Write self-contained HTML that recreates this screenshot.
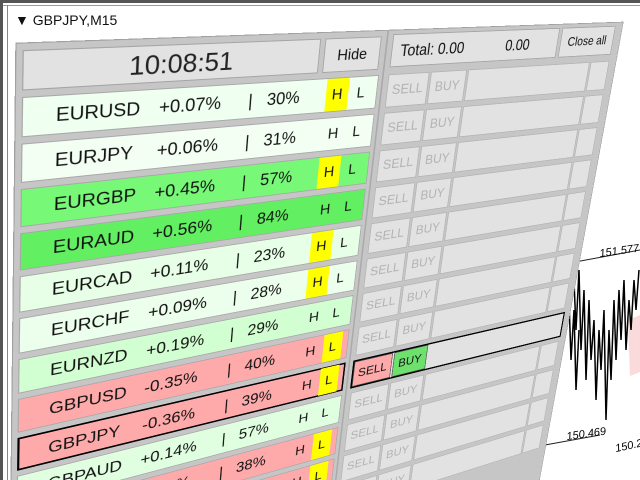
<!DOCTYPE html>
<html><head><meta charset="utf-8">
<style>
html,body{margin:0;padding:0;width:640px;height:480px;overflow:hidden;background:#fff;font-family:"Liberation Sans",sans-serif;}
.frame{position:absolute;left:0;top:0;width:640px;height:480px;overflow:hidden;}
#p{position:absolute;left:0;top:0;width:700px;height:400px;transform-origin:0 0;
transform:matrix3d(1.21856,-0.016214,0,0.00059864,-0.007346,1.10492,0,0.00031061,0,0,1,0,22,97,0,1);}
#p div{position:absolute;box-sizing:border-box;}
.bg{left:-6px;top:-50px;width:706px;height:760px;background:#c6c6c6;border:1px solid #a0a0a0;}
.box{background:#e2e2e2;border:1px solid #a4a4a4;}
.row{left:0;width:360px;height:38px;border:1px solid #a8a8a8;font-size:18px;color:#111;}
.row span{position:absolute;top:8px;}
.hb,.lb{top:0;height:36px;text-align:center;line-height:36px;font-size:17px;}
.cell{height:38px;background:#e2e2e2;border:1px solid #b4b4b4;color:#b2b2b2;font-size:16px;text-align:center;line-height:36px;}
</style></head><body>
<div class="frame">
<div style="position:absolute;left:0;top:0;width:640px;height:3px;background:#555"></div>
<div style="position:absolute;left:0;top:5px;width:640px;height:1px;background:#999"></div>
<div style="position:absolute;left:0;top:0;width:3px;height:480px;background:#555"></div>
<div style="position:absolute;left:7px;top:5px;width:1px;height:475px;background:#888"></div>
<div style="position:absolute;left:15px;top:12px;font-size:14px;color:#111">&#9660; GBPJPY,M15</div>
<svg style="position:absolute;left:0;top:0" width="640" height="480">
<polygon points="560,258 640,240 640,450 555,455" fill="#fff"/>
<polygon points="628,320 640,315 640,372 630,376" fill="#fadada"/>
<line x1="575" y1="262" x2="640" y2="250" stroke="#222"/>
<line x1="545" y1="445" x2="600" y2="435" stroke="#222"/>
<polyline points="572,300 574,280 576,330 579,270 581,350 584,290 586,380 589,300 591,360 594,320 596,400 599,330 601,370 604,310 606,420 609,330 611,380 614,300 616,360 619,290 621,340 624,280 626,350 629,300 631,330 634,280 636,310 639,270" fill="none" stroke="#000" stroke-width="1.5"/>
<polyline points="566,330 569,300 571,360 574,310 576,390 579,330" fill="none" stroke="#000" stroke-width="1.5"/>
<text x="600" y="257" font-size="11" font-family="Liberation Sans" font-style="italic" transform="rotate(-8 600 257)">151.577</text>
<text x="567" y="440" font-size="11" font-family="Liberation Sans" font-style="italic" transform="rotate(-8 567 440)">150.469</text>
<text x="616" y="452" font-size="11" font-family="Liberation Sans" font-style="italic" transform="rotate(-12 616 452)">150.20</text>
</svg>
<div id="p">
<div class="bg"></div>
<div class="box" style="left:0;top:-43px;width:287px;height:37px;font-size:26px;text-align:center;line-height:36px;color:#222">10:08:51</div>
<div class="box" style="left:292px;top:-43px;width:66px;height:37px;font-size:17px;text-align:center;line-height:36px;color:#111">Hide</div>
<div class="box" style="left:372px;top:-45px;width:228px;height:37px;font-size:18px;line-height:36px;color:#111"><span style="position:absolute;left:10px">Total: 0.00</span><span style="position:absolute;left:150px">0.00</span></div>
<div class="box" style="left:604px;top:-45px;width:84px;height:37px;font-size:16px;text-align:center;line-height:36px;color:#111">Close all</div>
<div style="left:364px;top:-50px;width:2px;height:760px;background:#aaa"></div>

<div class="row" style="top:0;background:#effff0"><span style="left:28px">EURUSD</span><span style="left:122px">+0.07%</span><span style="left:212px">|</span><span style="left:232px">30%</span><div class="hb" style="left:298px;width:26px;background:#ffff00">H</div><div class="lb" style="left:327px;width:24px">L</div></div>
<div class="row" style="top:44px;background:#f4fff4"><span style="left:28px">EURJPY</span><span style="left:122px">+0.06%</span><span style="left:212px">|</span><span style="left:232px">31%</span><div class="hb" style="left:298px;width:26px">H</div><div class="lb" style="left:327px;width:24px">L</div></div>
<div class="row" style="top:88px;background:#77f877"><span style="left:28px">EURGBP</span><span style="left:122px">+0.45%</span><span style="left:212px">|</span><span style="left:232px">57%</span><div class="hb" style="left:298px;width:26px;background:#ffff00">H</div><div class="lb" style="left:327px;width:24px">L</div></div>
<div class="row" style="top:132px;background:#62f062"><span style="left:28px">EURAUD</span><span style="left:122px">+0.56%</span><span style="left:212px">|</span><span style="left:232px">84%</span><div class="hb" style="left:298px;width:26px">H</div><div class="lb" style="left:327px;width:24px">L</div></div>
<div class="row" style="top:176px;background:#e6ffe6"><span style="left:28px">EURCAD</span><span style="left:122px">+0.11%</span><span style="left:212px">|</span><span style="left:232px">23%</span><div class="hb" style="left:298px;width:26px;background:#ffff00">H</div><div class="lb" style="left:327px;width:24px">L</div></div>
<div class="row" style="top:220px;background:#ecffec"><span style="left:28px">EURCHF</span><span style="left:122px">+0.09%</span><span style="left:212px">|</span><span style="left:232px">28%</span><div class="hb" style="left:298px;width:26px;background:#ffff00">H</div><div class="lb" style="left:327px;width:24px">L</div></div>
<div class="row" style="top:264px;background:#d2ffd2"><span style="left:28px">EURNZD</span><span style="left:122px">+0.19%</span><span style="left:212px">|</span><span style="left:232px">29%</span><div class="hb" style="left:298px;width:26px">H</div><div class="lb" style="left:327px;width:24px">L</div></div>
<div class="row" style="top:308px;background:#ffaaaa"><span style="left:28px">GBPUSD</span><span style="left:122px">-0.35%</span><span style="left:212px">|</span><span style="left:232px">40%</span><div class="hb" style="left:298px;width:26px">H</div><div class="lb" style="left:327px;width:24px;background:#ffff00">L</div></div>
<div class="row" style="top:352px;background:#ffaaaa;border:2px solid #000"><span style="left:27px">GBPJPY</span><span style="left:121px">-0.36%</span><span style="left:211px">|</span><span style="left:231px">39%</span><div class="hb" style="left:297px;width:26px;top:-1px">H</div><div class="lb" style="left:326px;width:24px;top:-1px;background:#ffff00">L</div></div>
<div class="row" style="top:396px;background:#e0ffe0"><span style="left:28px">GBPAUD</span><span style="left:122px">+0.14%</span><span style="left:212px">|</span><span style="left:232px">57%</span><div class="hb" style="left:298px;width:26px">H</div><div class="lb" style="left:327px;width:24px">L</div></div>
<div class="row" style="top:440px;background:#ffaaaa"><span style="left:28px">GBPCAD</span><span style="left:122px">-0.30%</span><span style="left:212px">|</span><span style="left:232px">38%</span><div class="hb" style="left:298px;width:26px">H</div><div class="lb" style="left:327px;width:24px;background:#ffff00">L</div></div>
<div class="row" style="top:484px;background:#ffaaaa"><span style="left:28px">GBPCHF</span><span style="left:122px">-0.28%</span><span style="left:212px">|</span><span style="left:232px">35%</span><div class="hb" style="left:298px;width:26px">H</div><div class="lb" style="left:327px;width:24px;background:#ffff00">L</div></div>

<div class="cell" style="left:372px;top:0;width:52px">SELL</div><div class="cell" style="left:426px;top:0;width:48px">BUY</div><div class="cell" style="left:476px;top:0;width:180px"></div><div class="cell" style="left:658px;top:0;width:30px"></div>
<div class="cell" style="left:372px;top:44px;width:52px">SELL</div><div class="cell" style="left:426px;top:44px;width:48px">BUY</div><div class="cell" style="left:476px;top:44px;width:180px"></div><div class="cell" style="left:658px;top:44px;width:30px"></div>
<div class="cell" style="left:372px;top:88px;width:52px">SELL</div><div class="cell" style="left:426px;top:88px;width:48px">BUY</div><div class="cell" style="left:476px;top:88px;width:180px"></div><div class="cell" style="left:658px;top:88px;width:30px"></div>
<div class="cell" style="left:372px;top:132px;width:52px">SELL</div><div class="cell" style="left:426px;top:132px;width:48px">BUY</div><div class="cell" style="left:476px;top:132px;width:180px"></div><div class="cell" style="left:658px;top:132px;width:30px"></div>
<div class="cell" style="left:372px;top:176px;width:52px">SELL</div><div class="cell" style="left:426px;top:176px;width:48px">BUY</div><div class="cell" style="left:476px;top:176px;width:180px"></div><div class="cell" style="left:658px;top:176px;width:30px"></div>
<div class="cell" style="left:372px;top:220px;width:52px">SELL</div><div class="cell" style="left:426px;top:220px;width:48px">BUY</div><div class="cell" style="left:476px;top:220px;width:180px"></div><div class="cell" style="left:658px;top:220px;width:30px"></div>
<div class="cell" style="left:372px;top:264px;width:52px">SELL</div><div class="cell" style="left:426px;top:264px;width:48px">BUY</div><div class="cell" style="left:476px;top:264px;width:180px"></div><div class="cell" style="left:658px;top:264px;width:30px"></div>
<div class="cell" style="left:372px;top:308px;width:52px">SELL</div><div class="cell" style="left:426px;top:308px;width:48px">BUY</div><div class="cell" style="left:476px;top:308px;width:180px"></div><div class="cell" style="left:658px;top:308px;width:30px"></div>
<div style="left:370px;top:352px;width:320px;height:38px;border:2px solid #000;background:#e2e2e2"></div>
<div class="cell" style="left:372px;top:354px;width:52px;height:34px;line-height:34px;background:#ffaaaa;color:#111;border-color:#555">SELL</div><div class="cell" style="left:426px;top:354px;width:48px;height:34px;line-height:34px;background:#6ee06e;color:#111;border-color:#555">BUY</div>
<div class="cell" style="left:372px;top:396px;width:52px">SELL</div><div class="cell" style="left:426px;top:396px;width:48px">BUY</div><div class="cell" style="left:476px;top:396px;width:180px"></div><div class="cell" style="left:658px;top:396px;width:30px"></div>
<div class="cell" style="left:372px;top:440px;width:52px">SELL</div><div class="cell" style="left:426px;top:440px;width:48px">BUY</div><div class="cell" style="left:476px;top:440px;width:180px"></div><div class="cell" style="left:658px;top:440px;width:30px"></div>
<div class="cell" style="left:372px;top:484px;width:52px">SELL</div><div class="cell" style="left:426px;top:484px;width:48px">BUY</div><div class="cell" style="left:476px;top:484px;width:180px"></div><div class="cell" style="left:658px;top:484px;width:30px"></div>
<div class="cell" style="left:372px;top:528px;width:52px">SELL</div><div class="cell" style="left:426px;top:528px;width:48px">BUY</div><div class="cell" style="left:476px;top:528px;width:180px"></div><div class="cell" style="left:658px;top:528px;width:30px"></div>
</div>
</div>
</body></html>
